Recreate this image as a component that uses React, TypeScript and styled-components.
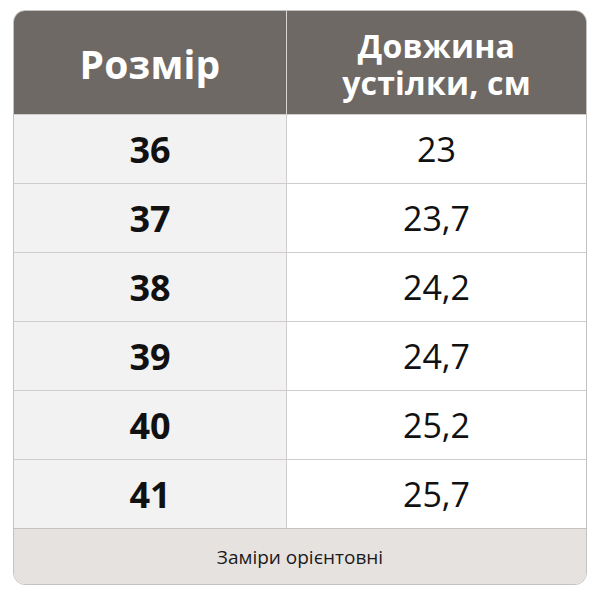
import React from 'react'
import styled, { createGlobalStyle } from 'styled-components'

const GlobalStyle = createGlobalStyle`
  html, body {
    margin: 0;
    padding: 0;
    background: #ffffff;
  }
  body {
    font-family: "Open Sans", "Noto Sans", sans-serif;
  }
`

const Page = styled.div`
  width: 600px;
  height: 600px;
  padding: 10px 13px 0 13px;
  box-sizing: border-box;
`

const Table = styled.div`
  width: 574px;
  border: 1px solid #c6c2c0;
  border-radius: 12px;
  overflow: hidden;
  box-sizing: border-box;
  display: grid;
  grid-template-columns: 273px 1fr;
`

const HeadCell = styled.div`
  height: 103px;
  background: #6f6966;
  color: #ffffff;
  font-weight: 700;
  display: flex;
  align-items: center;
  justify-content: center;
  text-align: center;
  box-sizing: border-box;
  &:first-child {
    border-right: 1px solid #d8d4d2;
  }
`

const HeadTitle = styled.span<{ $size: number }>`
  font-size: ${p => p.$size}px;
  line-height: 37px;
  letter-spacing: 0.2px;
  padding-top: 2px;
`

const Cell = styled.div<{ $left?: boolean }>`
  height: 69px;
  border-top: 1px solid #d0cdcc;
  box-sizing: border-box;
  background: ${p => (p.$left ? '#f2f2f2' : '#ffffff')};
  border-right: ${p => (p.$left ? '1px solid #d0cdcc' : 'none')};
  display: flex;
  align-items: center;
  justify-content: center;
  color: #111111;
  font-size: ${p => (p.$left ? 36 : 34)}px;
  font-weight: ${p => (p.$left ? 700 : 400)};
`

const Footer = styled.div`
  grid-column: 1 / 3;
  height: 56px;
  border-top: 1px solid #c6c2c0;
  background: #e6e2e0;
  display: flex;
  align-items: center;
  justify-content: center;
  font-size: 19px;
  color: #1a1a1a;
  box-sizing: border-box;
`

const rows = [
  { size: '36', len: '23' },
  { size: '37', len: '23,7' },
  { size: '38', len: '24,2' },
  { size: '39', len: '24,7' },
  { size: '40', len: '25,2' },
  { size: '41', len: '25,7' },
]

const App: React.FC = () => {
  return (
    <>
      <GlobalStyle />
      <Page>
        <Table>
          <HeadCell>
            <HeadTitle $size={39}>Розмір</HeadTitle>
          </HeadCell>
          <HeadCell>
            <HeadTitle $size={32}>
              Довжина
              <br />
              устілки, см
            </HeadTitle>
          </HeadCell>
          {rows.map(r => (
            <React.Fragment key={r.size}>
              <Cell $left>{r.size}</Cell>
              <Cell>{r.len}</Cell>
            </React.Fragment>
          ))}
          <Footer>Заміри орієнтовні</Footer>
        </Table>
      </Page>
    </>
  )
}

export default App
